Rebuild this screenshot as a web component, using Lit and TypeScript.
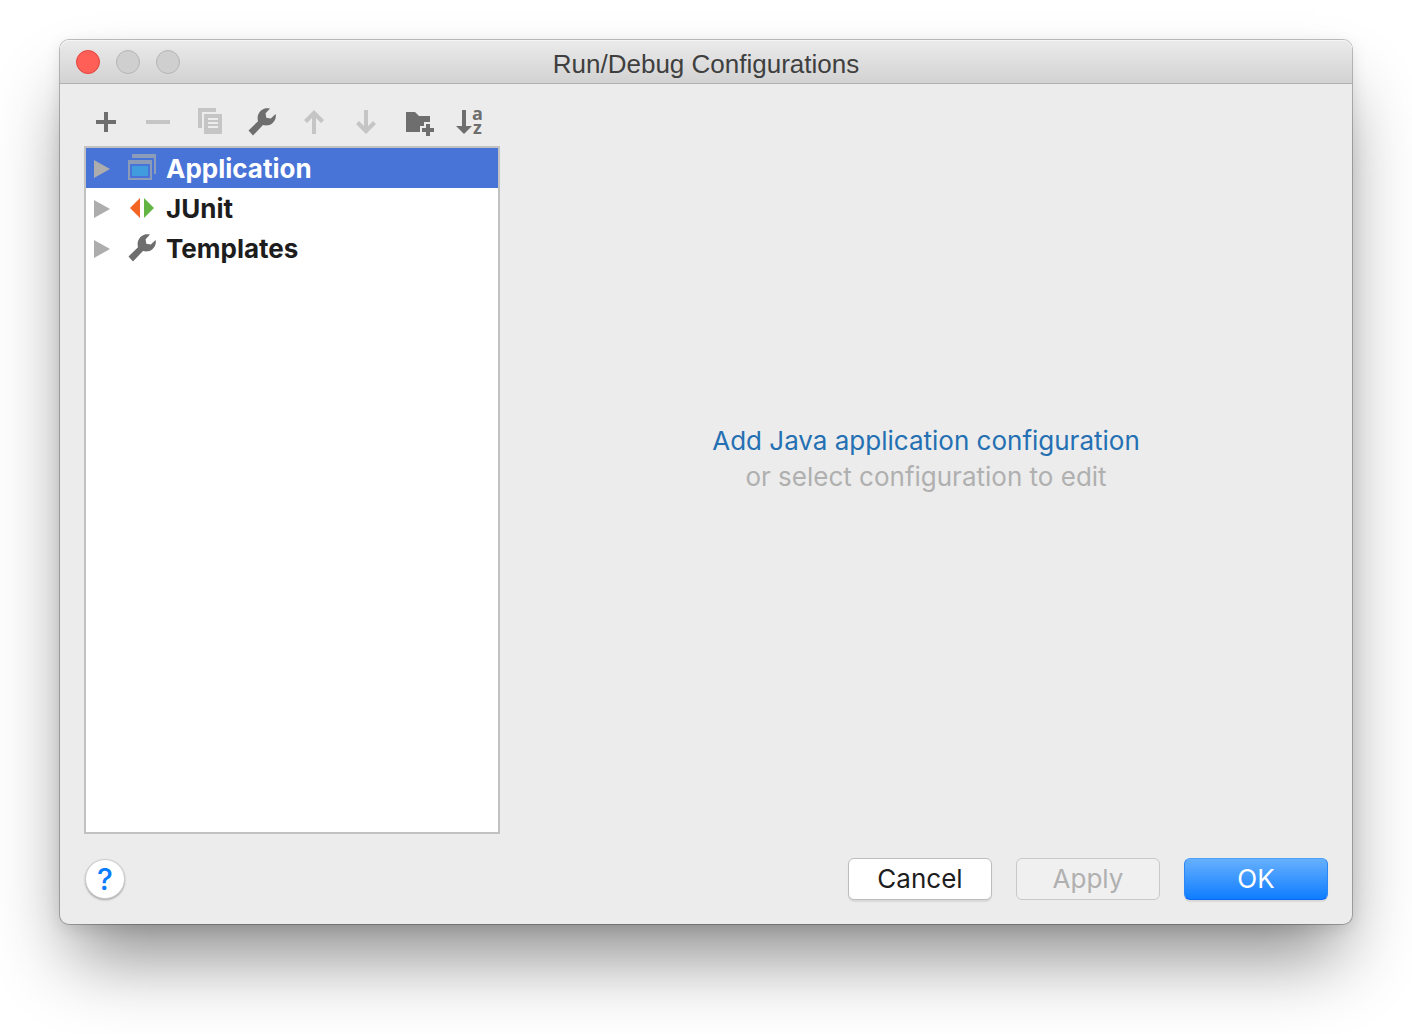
import { LitElement, html, css, svg } from "lit";
import { customElement, state } from "lit/decorators.js";
import { classMap } from "lit/directives/class-map.js";

const wrench = svg`<path fill="#6e6e6e" d="M2.5 24.5L12 15.2C10.500 9.500 13.500 4 19.500 2.300C21 2 22.500 2.100 24 2.600L19.600 7.200L20.300 11.700L24.800 12.400L29.600 8C30.800 13 27 18.500 22 19.300C20 19.600 18.400 19.300 17 18.900L7 29.500Z"/>`;

const icons: Record<string, unknown> = {
  add: svg`<path fill="#6e6e6e" d="M14 6h4v8h8v4h-8v8h-4v-8H6v-4h8z"/>`,
  remove: svg`<path fill="#c5c5c5" d="M4 14h24v4H4z"/>`,
  copy: svg`<path fill="#c5c5c5" fill-rule="evenodd" d="M4 2h18v4H8v16H4zM10 8h18v20H10zM14 12v2h10v-2zM14 16v2h10v-2zM14 20v2h10v-2z"/>`,
  wrench,
  up: svg`<path fill="#c5c5c5" d="M16 4l10 10-3 3-5-5v16h-4V12l-5 5-3-3z"/>`,
  down: svg`<path fill="#c5c5c5" d="M16 28l10-10-3-3-5 5V4h-4v16l-5-5-3 3z"/>`,
  folder: svg`<path fill="#6e6e6e" d="M4 6h9l4 4h11v6h-6v4h-4v6H4zM24 18h4v4h4v4h-4v4h-4v-4h-4v-4h4z"/>`,
  sort: svg`<path fill="#6e6e6e" d="M8 4h4v16h6l-8 8-8-8h6z"/>
    <text x="18" y="14" class="letter">a</text><text x="19" y="28" class="letter">z</text>`,
  application: svg`<path fill="#8c9cb8" d="M6 2h24v20h-2V6H6z"/>
    <path fill="#8c9cb8" fill-rule="evenodd" d="M2 8h24v20H2zM4 12v14h20V12z"/>
    <path fill="#419cdf" d="M6 14h16v10H6z"/>`,
  junit: svg`<path fill="#f26522" d="M14 6v20L4 16z"/><path fill="#62b543" d="M18 6v20l10-10z"/>`,
};

const icon = (name: string) =>
  html`<svg class="icon" viewBox="0 0 32 32" width="32" height="32" aria-hidden="true">${icons[name]}</svg>`;

@customElement("config-toolbar")
class ConfigToolbar extends LitElement {
  static styles = css`
    :host { display: block; }
    .bar { display: flex; gap: 8px; }
    .tool {
      width: 44px; height: 44px; padding: 0; border: 0; background: none;
      display: flex; align-items: center; justify-content: center;
    }
    .icon { overflow: visible; }
    .letter { font: bold 18px "Open Sans", sans-serif; fill: #6e6e6e; }
  `;
  private tools = [
    ["add", "Add New Configuration"],
    ["remove", "Remove Configuration", true],
    ["copy", "Copy Configuration", true],
    ["wrench", "Edit Templates"],
    ["up", "Move Up", true],
    ["down", "Move Down", true],
    ["folder", "Create New Folder"],
    ["sort", "Sort Configurations"],
  ] as [string, string, boolean?][];
  render() {
    return html`<div class="bar" role="toolbar">
      ${this.tools.map(([name, label, off]) => html`<button class="tool" aria-label=${label} ?disabled=${off}>${icon(name)}</button>`)}
    </div>`;
  }
}

@customElement("config-tree")
class ConfigTree extends LitElement {
  static styles = css`
    :host { display: block; background: #fff; border: 2px solid #c2c2c2; }
    .row {
      width: 100%; height: 40px; padding: 0 8px; border: 0; background: none;
      display: flex; align-items: center; text-align: left;
      font: bold 26px/38px Inter, sans-serif; color: #1d1d1d;
    }
    .selected { background: #4873d7; color: #fff; }
    .arrow { width: 16px; height: 20px; margin-right: 16px; }
    .icon { margin-right: 8px; }
    .label { padding-top: 2px; }
  `;
  @state() private selected = "Application";
  private rows = [["application", "Application"], ["junit", "JUnit"], ["wrench", "Templates"]];
  render() {
    return html`${this.rows.map(([name, label]) => html`
      <button class=${classMap({ row: true, selected: label === this.selected })} @click=${() => (this.selected = label)}>
        <svg class="arrow" viewBox="0 0 16 20" aria-hidden="true"><path fill="#adadad" d="M0 2l16 9-16 9z"/></svg>
        ${icon(name)}<span class="label">${label}</span>
      </button>`)}`;
  }
}

@customElement("app-root")
class AppRoot extends LitElement {
  static styles = css`
    :host {
      display: flex; box-sizing: border-box; min-height: 100vh; padding: 40px 60px 110px;
      background: #fff; overflow: hidden; font-family: Inter, sans-serif;
    }
    .window {
      flex: 1; display: flex; flex-direction: column; border-radius: 9px; background: #ececec;
      box-shadow: 0 0 0 1px rgba(0, 0, 0, 0.24), 0 4px 16px rgba(0, 0, 0, 0.1), 0 44px 70px -12px rgba(0, 0, 0, 0.46);
    }
    .titlebar {
      display: grid; grid-template-columns: 1fr auto 1fr; align-items: center; box-sizing: border-box;
      height: 44px; padding: 0 16px; border-bottom: 1px solid #b1b1b1; border-radius: 9px 9px 0 0;
      background: linear-gradient(#ebebeb, #d2d2d2); box-shadow: inset 0 1px #f6f6f6;
    }
    .lights { display: flex; gap: 16px; }
    .light { width: 24px; height: 24px; padding: 0; border: 1px solid #b5b5b5; border-radius: 50%; background: #cfcfcf; }
    .close { background: #ff5f57; border-color: #e2463f; }
    .title { margin: 0; padding-top: 4px; font: 26px/32px "Liberation Sans", sans-serif; color: #3f3f3f; }
    .body { flex: 1; display: flex; padding: 16px 24px 24px; }
    .side { flex: 0 0 416px; display: flex; flex-direction: column; }
    .tree { flex: 1; margin-top: 2px; }
    .detail {
      flex: 1; display: flex; flex-direction: column; align-items: center; justify-content: center;
      padding: 0 0 16px 24px; font-size: 26px; line-height: 36px; color: #b0b0b0; text-align: center;
    }
    .hint { margin: 0; }
    .link { color: #2470b3; text-decoration: none; }
    .footer { display: flex; align-items: center; gap: 24px; padding: 0 24px 24px 25px; }
    .help {
      width: 40px; height: 40px; margin-right: auto; padding: 0; border: 1px solid #cdcdcd; border-radius: 50%;
      background: #fff; box-shadow: 0 1px 2px rgba(0, 0, 0, 0.3);
      font: 500 30px/38px Inter, sans-serif; color: #0a7cff;
    }
    .btn {
      width: 144px; height: 42px; padding: 0; border: 1px solid #bcbcbc; border-radius: 6px; background: #fff;
      font: 26px/40px Inter, sans-serif; color: #1d1d1d; box-shadow: 0 2px 1px rgba(0, 0, 0, 0.08);
    }
    .btn:disabled { background: #f0f0f0; border-color: #c9c9c9; color: #b0b0b0; box-shadow: none; }
    .primary { background: linear-gradient(#66b0fd, #0f7dff); border-color: #4ba0f8 #2b86f8 #0a68f5; color: #fff; }
  `;
  render() {
    return html`<main class="window">
      <header class="titlebar">
        <div class="lights">
          <button class="light close" aria-label="Close"></button>
          <button class="light" aria-label="Minimize" disabled></button>
          <button class="light" aria-label="Zoom" disabled></button>
        </div>
        <h1 class="title">Run/Debug Configurations</h1>
      </header>
      <div class="body">
        <div class="side">
          <config-toolbar></config-toolbar>
          <config-tree class="tree"></config-tree>
        </div>
        <section class="detail">
          <a class="link" href="#">Add Java application configuration</a>
          <p class="hint">or select configuration to edit</p>
        </section>
      </div>
      <footer class="footer">
        <button class="help" aria-label="Help">?</button>
        <button class="btn">Cancel</button>
        <button class="btn" disabled>Apply</button>
        <button class="btn primary">OK</button>
      </footer>
    </main>`;
  }
}
